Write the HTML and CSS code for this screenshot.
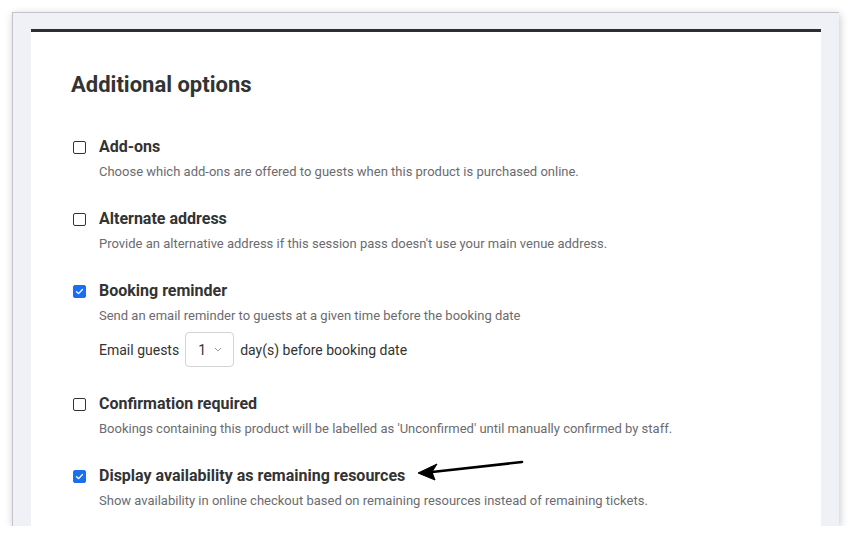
FILE: index.html
```html
<!DOCTYPE html>
<html lang="en">
<head>
  <meta charset="UTF-8">
  <meta name="viewport" content="width=device-width, initial-scale=1.0">
  <title>Additional options</title>
  <link rel="stylesheet" href="styles.css">
</head>
<body>
  <div class="window">
    <div class="panel">
      <h2>Additional options</h2>

      <div class="option">
        <span class="check"></span>
        <div class="option-body">
          <div class="option-title">Add-ons</div>
          <p class="option-desc">Choose which add-ons are offered to guests when this product is purchased online.</p>
        </div>
      </div>

      <div class="option">
        <span class="check"></span>
        <div class="option-body">
          <div class="option-title">Alternate address</div>
          <p class="option-desc">Provide an alternative address if this session pass doesn't use your main venue address.</p>
        </div>
      </div>

      <div class="option">
        <span class="check checked">
          <svg viewBox="0 0 14 14"><path d="M3.2 7.2l2.6 2.5 5-5.2" fill="none" stroke="#fff" stroke-width="1.7" stroke-linecap="round" stroke-linejoin="round"/></svg>
        </span>
        <div class="option-body">
          <div class="option-title">Booking reminder</div>
          <p class="option-desc">Send an email reminder to guests at a given time before the booking date</p>
          <div class="inline-field">
            <span>Email guests</span>
            <div class="select">
              <span>1</span>
              <svg viewBox="0 0 8 5"><path d="M1 1l3 3 3-3" fill="none" stroke="#9a9a9a" stroke-width="1"/></svg>
            </div>
            <span>day(s) before booking date</span>
          </div>
        </div>
      </div>

      <div class="option">
        <span class="check"></span>
        <div class="option-body">
          <div class="option-title">Confirmation required</div>
          <p class="option-desc">Bookings containing this product will be labelled as 'Unconfirmed' until manually confirmed by staff.</p>
        </div>
      </div>

      <div class="option">
        <span class="check checked">
          <svg viewBox="0 0 14 14"><path d="M3.2 7.2l2.6 2.5 5-5.2" fill="none" stroke="#fff" stroke-width="1.7" stroke-linecap="round" stroke-linejoin="round"/></svg>
        </span>
        <div class="option-body">
          <div class="option-title">
            Display availability as remaining resources
            <!-- annotation arrow -->
            <svg class="arrow" viewBox="0 0 110 24"><path d="M106 3L16 13" stroke="#000" stroke-width="2.6" stroke-linecap="round"/><path d="M2 14L21 5 16 13 19 21z" fill="#000" stroke="#000" stroke-width="1" stroke-linejoin="round"/></svg>
          </div>
          <p class="option-desc">Show availability in online checkout based on remaining resources instead of remaining tickets.</p>
        </div>
      </div>
    </div>
  </div>
</body>
</html>
```

FILE: styles.css
```css
* {
  margin: 0;
  padding: 0;
  box-sizing: border-box;
}

body {
  font-family: Roboto, 'Liberation Sans', Arial, sans-serif;
  background-color: #fff;
  color: #333;
  overflow: hidden;
}

.window {
  margin: 12px 0 0 12px;
  width: 827px;
  height: 514px;
  background-color: #f0f1f6;
  border-top: 1px solid #c4c4c8;
  border-left: 1px solid #c4c4c8;
  box-shadow: 1px 2px 8px rgba(0, 0, 0, 0.22);
  padding: 16px 18px 0 18px;
  overflow: hidden;
}

.panel {
  background: #fff;
  border-top: 3px solid #2d2e33;
  padding: 38px 40px 40px 40px;
  height: 600px;
}

h2 {
  font-size: 22px;
  font-weight: 700;
  color: #333;
  line-height: 30px;
  margin-bottom: 35px;
}

.option {
  display: flex;
  gap: 13px;
  margin-bottom: 23px;
}

.check {
  flex: none;
  width: 13px;
  height: 13px;
  margin: 6px 0 0 2px;
  border: 1.5px solid #333;
  border-radius: 2px;
}

.check.checked {
  background: #1a6ff0;
  border-color: #1a6ff0;
}

.check svg {
  display: block;
  width: 100%;
  height: 100%;
}

.option-title {
  position: relative;
  font-size: 16px;
  font-weight: 700;
  line-height: 24px;
  color: #333;
}

.option-desc {
  margin-top: 1px;
  font-size: 13px;
  line-height: 24px;
  color: #6b6b70;
}

.inline-field {
  display: flex;
  align-items: center;
  gap: 6px;
  margin-top: 4px;
  margin-bottom: 2px;
  font-size: 14px;
  color: #333;
}

.select {
  display: flex;
  align-items: center;
  justify-content: space-between;
  width: 49px;
  height: 35px;
  padding: 0 11px 0 12px;
  border: 1px solid #d3d3d6;
  border-radius: 4px;
  font-size: 14px;
}

.select svg {
  width: 8px;
  height: 5px;
}

.arrow {
  position: absolute;
  left: 317px;
  top: -5px;
  width: 110px;
  height: 24px;
}
```
